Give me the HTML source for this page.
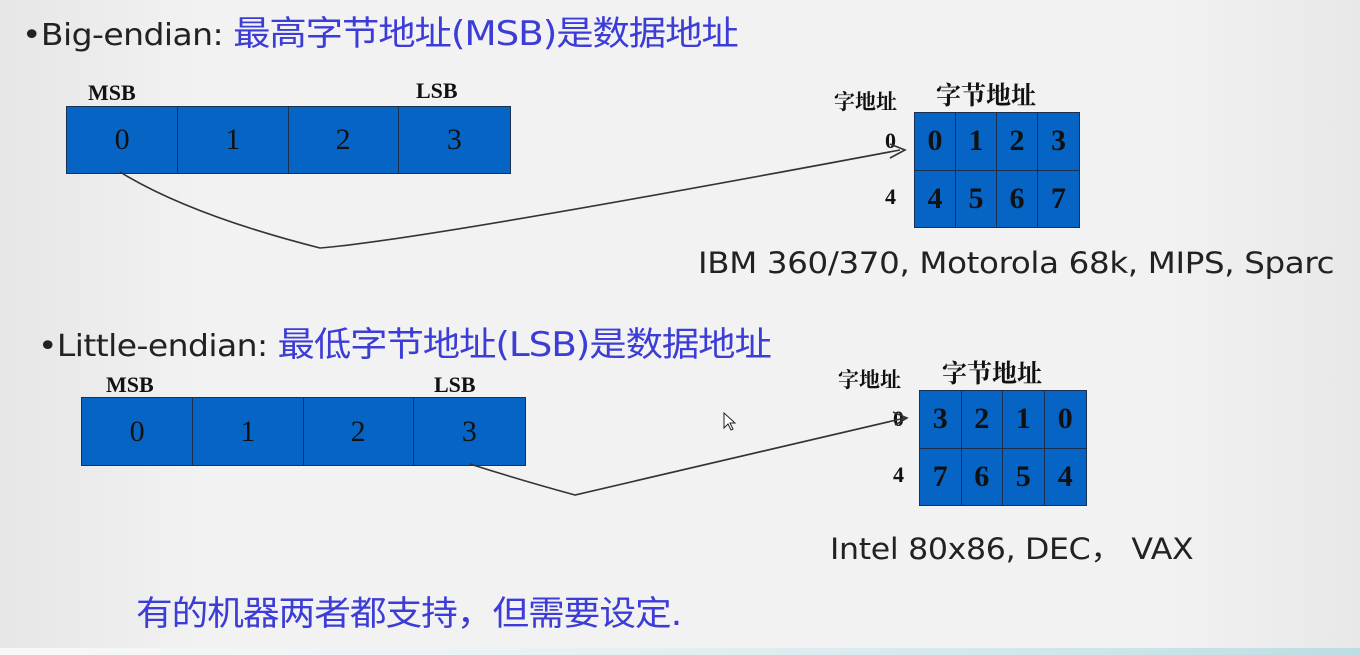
<!DOCTYPE html><html><head><style>
body{margin:0;width:1360px;height:655px;background:linear-gradient(90deg,#e6e6e6,#f2f2f2 15%,#f2f2f2 85%,#e8e8e8);position:relative;overflow:hidden;font-family:"DejaVu Sans","Noto Sans CJK SC",sans-serif}
.t{position:absolute;white-space:nowrap;transform-origin:0 50%}
.s{font-family:"Liberation Serif","Noto Serif CJK SC",serif;font-weight:bold;color:#111}
.row{position:absolute;display:flex;background:#0664c4;border:1px solid #1a3050}
.row div{border-right:1px solid #1a3050;display:flex;align-items:center;justify-content:center;font-family:"Liberation Serif",serif;font-size:30px;color:#111}
.row div:last-child{border-right:none}
.g{position:absolute;display:grid;grid-template-columns:repeat(4,1fr);background:#0664c4;border:1px solid #1a3050}
.g div{border-right:1px solid #1a3050;border-bottom:1px solid #1a3050;display:flex;align-items:center;justify-content:center;font-family:"Liberation Serif",serif;font-weight:bold;font-size:30px;color:#111}
.b{color:#3c3cd6;font-family:"DejaVu Sans","Noto Sans CJK SC",sans-serif}
</style></head><body>
<div class="t" style="left:22px;top:6px;font-size:30px;color:#222;letter-spacing:-0.5px;transform:scaleX(1.1)">•Big-endian: <span class="b" style="font-size:34px;letter-spacing:-1px">最高字节地址(MSB)是数据地址</span></div>
<div class="t s" style="left:88px;top:80px;font-size:22px">MSB</div>
<div class="t s" style="left:416px;top:78px;font-size:22px">LSB</div>
<div class="row" style="left:66px;top:106px;width:443px;height:66px"><div style="width:111px">0</div><div style="width:110px">1</div><div style="width:110px">2</div><div style="width:112px">3</div></div>
<div class="t s" style="left:834px;top:86px;font-size:21px">字地址</div>
<div class="t s" style="left:936px;top:76px;font-size:25px">字节地址</div>
<div class="t s" style="left:885px;top:128px;font-size:22px">0</div>
<div class="t s" style="left:885px;top:184px;font-size:22px">4</div>
<div class="g" style="left:914px;top:112px;width:164px;height:114px"><div>0</div><div>1</div><div>2</div><div style="border-right:none">3</div><div style="border-bottom:none">4</div><div style="border-bottom:none">5</div><div style="border-bottom:none">6</div><div style="border:none">7</div></div>
<div class="t" style="left:698px;top:246px;font-size:29px;color:#222;letter-spacing:-0.3px;transform:scaleX(1.12)">IBM 360/370, Motorola 68k, MIPS, Sparc</div>

<div class="t" style="left:38px;top:317px;font-size:30px;color:#222;letter-spacing:-0.5px;transform:scaleX(1.1)">•Little-endian: <span class="b" style="font-size:34px;letter-spacing:-1px">最低字节地址(LSB)是数据地址</span></div>
<div class="t s" style="left:106px;top:372px;font-size:22px">MSB</div>
<div class="t s" style="left:434px;top:372px;font-size:22px">LSB</div>
<div class="row" style="left:81px;top:397px;width:443px;height:67px"><div style="width:111px">0</div><div style="width:110px">1</div><div style="width:110px">2</div><div style="width:112px">3</div></div>
<div class="t s" style="left:838px;top:364px;font-size:21px">字地址</div>
<div class="t s" style="left:942px;top:354px;font-size:25px">字节地址</div>
<div class="t s" style="left:893px;top:406px;font-size:22px">0</div>
<div class="t s" style="left:893px;top:462px;font-size:22px">4</div>
<div class="g" style="left:919px;top:390px;width:166px;height:114px"><div>3</div><div>2</div><div>1</div><div style="border-right:none">0</div><div style="border-bottom:none">7</div><div style="border-bottom:none">6</div><div style="border-bottom:none">5</div><div style="border:none">4</div></div>
<div class="t" style="left:830px;top:526px;font-size:29px;color:#222;letter-spacing:-0.3px;transform:scaleX(1.09)">Intel 80x86, DEC， VAX</div>
<div class="t b" style="left:136px;top:586px;font-size:34px;letter-spacing:-1px;transform:scaleX(1.08)">有的机器两者都支持，但需要设定.</div>
<svg style="position:absolute;left:0;top:0" width="1360" height="655">
<path d="M120 172 Q190 215 320 248 Q420 240 900 150" fill="none" stroke="#333" stroke-width="1.6"/>
<path d="M890 144 L905 150 L890 158" fill="none" stroke="#333" stroke-width="1.6"/>
<path d="M470 464 Q520 480 575 495 Q640 480 905 418" fill="none" stroke="#333" stroke-width="1.6"/>
<path d="M893 412 L907 418 L895 425" fill="none" stroke="#333" stroke-width="1.6"/>
<path d="M724 413 L724 428 L728 424 L731 430 L733 429 L730 423 L735 423 Z" fill="#fff" stroke="#222" stroke-width="1"/>
</svg>
<div style="position:absolute;left:0;top:648px;width:1360px;height:7px;background:linear-gradient(90deg,#f8f8f8,#e8f2f4 40%,#cde6ea 80%,#bcdde2)"></div>
</body></html>
